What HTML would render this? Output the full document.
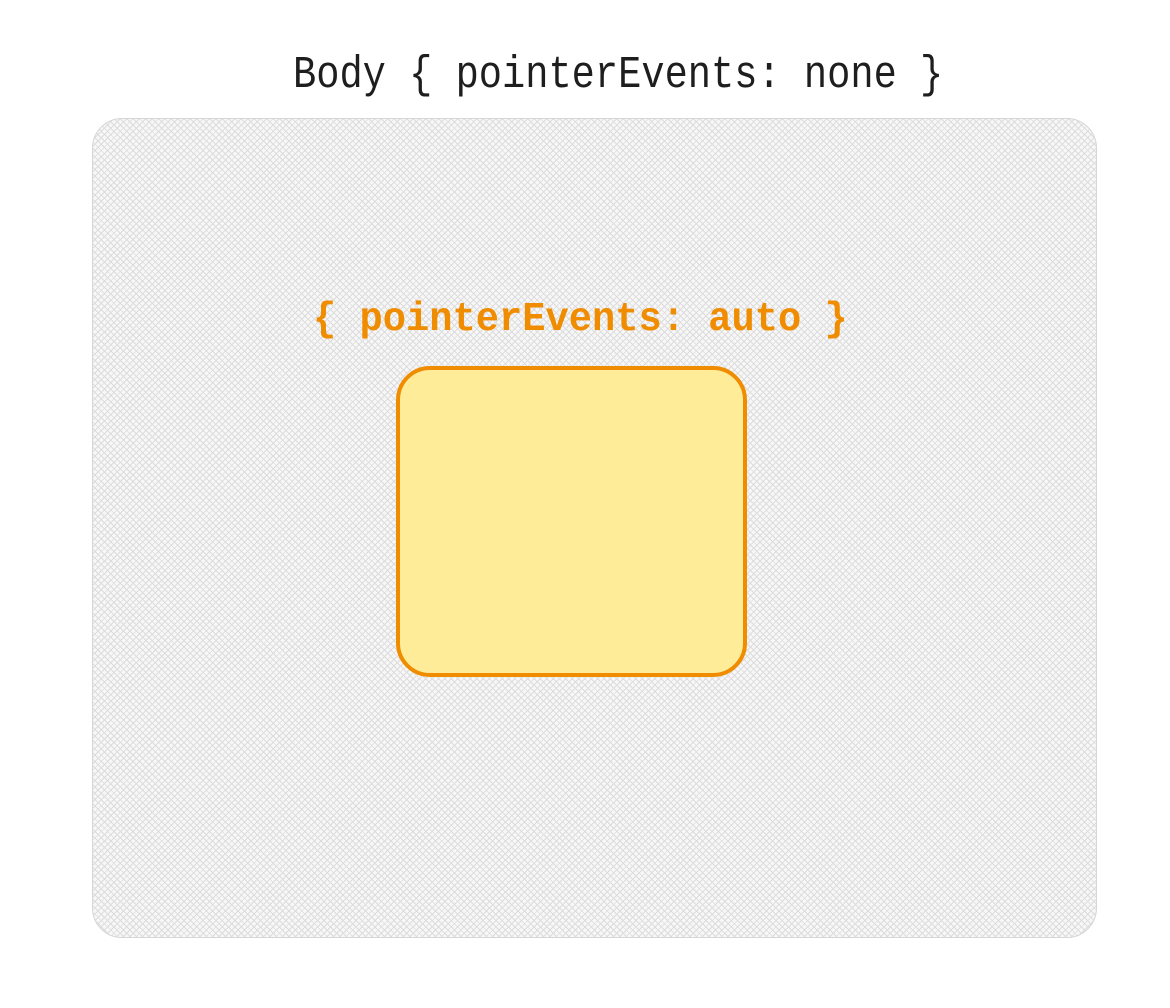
<!DOCTYPE html>
<html><head><meta charset="utf-8">
<style>
html,body{margin:0;padding:0;background:#fff;width:1170px;height:1008px;overflow:hidden;position:relative}
.t{position:absolute;font-family:"Liberation Mono",monospace;white-space:nowrap;line-height:1;transform-origin:0 0}
#t1{left:293px;top:53px;font-size:45px;color:#1e1e1e;transform:scaleX(0.86)}
#t2{left:313px;top:300px;font-size:41px;color:#f08c00;font-weight:bold;transform:scaleX(0.945)}
#outer{position:absolute;left:92px;top:118px;width:1003px;height:818px;border:1.5px solid #d6d6d6;border-radius:30px;
background:
repeating-linear-gradient(45deg, rgba(0,0,0,0) 0 3.5px, #dcdcdc 3.5px 4.5px),
repeating-linear-gradient(-45deg, rgba(0,0,0,0) 0 3.5px, #dcdcdc 3.5px 4.5px),#f7f7f7;}
#inner{position:absolute;left:396px;top:366px;width:343px;height:303px;border:4px solid #f08c00;border-radius:34px;background:#ffec99}
</style></head><body>
<div id="outer"></div>
<div class="t" id="t1">Body { pointerEvents: none }</div>
<div class="t" id="t2">{ pointerEvents: auto }</div>
<div id="inner"></div>
</body></html>
